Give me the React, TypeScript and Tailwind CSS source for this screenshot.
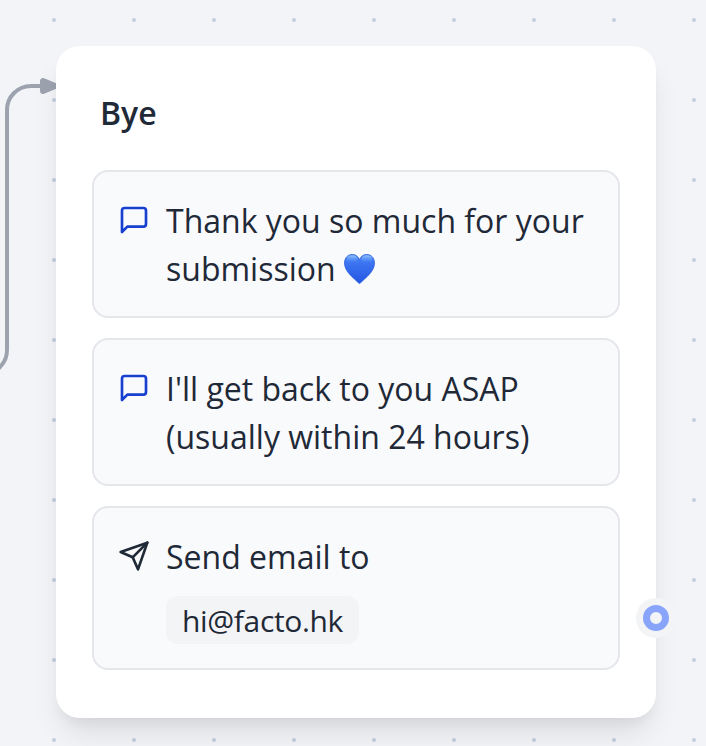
import type { ReactNode } from 'react';

function ChatIcon() {
  return (
    <svg className="mt-2 h-8 w-8 shrink-0 text-[#1740d0]" viewBox="0 0 24 24" fill="none" stroke="currentColor" strokeWidth="2" strokeLinecap="round" strokeLinejoin="round">
      <path d="M21 15a2 2 0 0 1-2 2H7l-4 4V5a2 2 0 0 1 2-2h14a2 2 0 0 1 2 2z" />
    </svg>
  );
}

function SendIcon() {
  return (
    <svg className="mt-2 h-8 w-8 shrink-0" viewBox="0 0 24 24" fill="none" stroke="currentColor" strokeWidth="2" strokeLinecap="round" strokeLinejoin="round">
      <path d="M22 2 11 13" />
      <path d="M22 2 15 22 11 13 2 9 22 2z" />
    </svg>
  );
}

function BlueHeart() {
  return (
    <svg className="inline-block h-[30px] w-[31px] align-[-3px]" viewBox="0 0 31 30">
      <defs>
        <linearGradient id="heart" x1="0" y1="0" x2="0" y2="1">
          <stop offset="0" stopColor="#4a8af6" />
          <stop offset="0.3" stopColor="#3c74f1" />
          <stop offset="1" stopColor="#2455e3" />
        </linearGradient>
        <linearGradient id="gloss" x1="0" y1="0" x2="0" y2="1">
          <stop offset="0" stopColor="#a9d0ff" stopOpacity="0.8" />
          <stop offset="1" stopColor="#5a97fa" stopOpacity="0" />
        </linearGradient>
      </defs>
      <path d="M15.500 5.600C14 2 11.300 0.400 8.300 0.400C3.800 0.400 0.500 4 0.500 9C0.500 17.500 9 23.500 15.500 29.700C22 23.500 30.500 17.500 30.500 9C30.500 4 27.200 0.400 22.700 0.400C19.700 0.400 17 2 15.500 5.600Z" fill="url(#heart)" stroke="#2c5fdb" strokeWidth="0.8" />
      <ellipse cx="8.200" cy="5" rx="5.500" ry="3.800" fill="url(#gloss)" />
      <ellipse cx="22.800" cy="5" rx="5.500" ry="3.800" fill="url(#gloss)" />
    </svg>
  );
}

function Step({ icon, children }: { icon: ReactNode; children: ReactNode }) {
  return (
    <div className="flex items-start gap-4 rounded-2xl border-2 border-[#e5e7eb] bg-[#f9fafc] px-6 py-6 text-[32px] leading-[48px]">
      {icon}
      <div className="whitespace-nowrap">{children}</div>
    </div>
  );
}

export default function App() {
  return (
    <div className="relative h-[746px] w-[706px] overflow-hidden bg-[#f3f4f8] pl-14 pt-[46px] font-['Open_Sans',sans-serif] text-[#1f2937]">
      <svg className="absolute inset-0 h-full w-full">
        <defs>
          <pattern id="dots" x="14" y="-20" width="80" height="80" patternUnits="userSpaceOnUse">
            <circle cx="40" cy="40" r="2" fill="#c3cde0" />
          </pattern>
        </defs>
        <rect width="706" height="746" fill="url(#dots)" />
        <g fill="none" stroke="#9ca3af">
          <path d="M-33 374H-17A24 24 0 0 0 7 350V110A24 24 0 0 1 31 86H54" strokeWidth="4" />
          <path d="M43 81V91L55 86Z" fill="#9ca3af" strokeWidth="6" strokeLinejoin="round" />
        </g>
      </svg>

      <section className="relative flex h-[672px] w-[600px] flex-col rounded-3xl bg-white px-9 pt-[43px] shadow-[0_20px_30px_-6px_rgba(0,0,0,0.1),0_8px_12px_-4px_rgba(0,0,0,0.05)]">
        <h2 className="pl-2 text-[32px] font-semibold leading-[48px]">Bye</h2>
        <div className="mt-[33px] flex flex-col gap-5">
          <Step icon={<ChatIcon />}>
            <p className="-mb-px pt-px">
              Thank you so much for your
              <br />
              submission <BlueHeart />
            </p>
          </Step>
          <Step icon={<ChatIcon />}>
            <p className="-mb-px pt-px">
              I'll get back to you ASAP
              <br />
              (usually within 24 hours)
            </p>
          </Step>
          <Step icon={<SendIcon />}>
            <p className="-mb-px pt-px">Send email to</p>
            <p className="mt-4 h-12 w-fit rounded-xl bg-[#f3f4f6] px-4 pt-px text-[30px] tracking-[-0.35px]">hi@facto.hk</p>
          </Step>
        </div>
        <span className="absolute -right-5 top-[552px] flex h-10 w-10 items-center justify-center rounded-full bg-[#f3f4f6]">
          <span className="h-[26px] w-[26px] rounded-full border-[7px] border-[#88a5fb] bg-[#f3f4f6]" />
        </span>
      </section>
    </div>
  );
}
